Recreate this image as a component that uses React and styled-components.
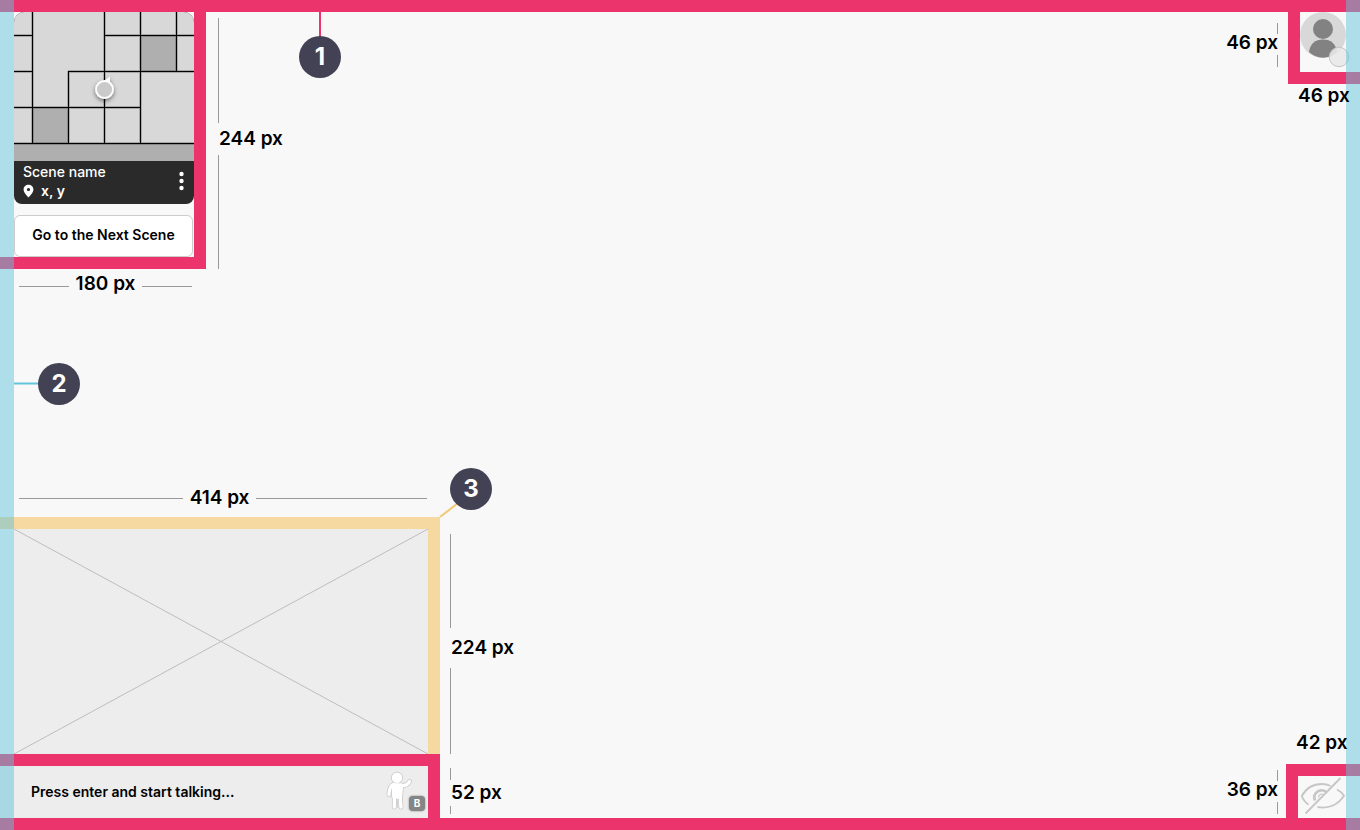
import React from "react";
import styled, { createGlobalStyle } from "styled-components";

const PINK = "#eb346c";
const YELLOW = "#f6d9a1";
const RAIL = "rgba(100, 196, 218, 0.5)";

const GlobalStyle = createGlobalStyle`
  *, *::before, *::after { box-sizing: border-box; }
  body {
    margin: 0;
    background: #f8f8f8;
    color: #000;
    font-family: Inter, "Liberation Sans", sans-serif;
  }
  button, input { font: inherit; color: inherit; }
`;

const Page = styled.main`
  position: relative;
  display: flex;
  flex-direction: column;
  min-height: 100vh;
  border-top: 12px solid ${PINK};
  border-bottom: 12px solid ${PINK};
`;

const Rail = styled.div`
  position: absolute;
  top: -12px;
  bottom: -12px;
  ${(p) => p.$side}: 0;
  width: 14px;
  background: ${RAIL};
  pointer-events: none;
`;

const Section = styled.section`
  display: flex;
  justify-content: space-between;
  align-items: ${(p) => p.$align};
`;

const Group = styled.div`
  display: flex;
  align-items: ${(p) => p.$align || "flex-start"};
`;

const Column = styled.div`
  display: flex;
  flex-direction: column;
`;

const SideColumn = styled(Column)`
  height: 350px;
  padding-left: 10px;
`;

const Middle = styled.div`
  display: flex;
  flex: 1;
  align-items: center;
  padding-left: 38px;
`;

/* Measurements */

const Label = styled.span`
  position: relative;
  z-index: 1;
  font-size: 19px;
  font-weight: 600;
  line-height: 24px;
  white-space: nowrap;
`;

const HorizontalMeasure = styled.div`
  display: flex;
  align-items: center;
  gap: 7px;
  padding: 0 ${(p) => p.$end}px 0 19px;
  margin: ${(p) => p.$margin};
`;

const HLine = styled.i`
  flex: ${(p) => p.$grow} 1 0;
  height: 1px;
  margin-top: ${(p) => p.$drop || 0}px;
  background: #999;
`;

const VerticalMeasure = styled.div`
  display: flex;
  flex-direction: column;
  align-items: ${(p) => (p.$side === "right" ? "flex-end" : "flex-start")};
  gap: ${(p) => p.$gap}px;
  margin: ${(p) => p.$margin};

  ${Label} {
    padding-left: ${(p) => (p.$side === "right" ? 0 : 1)}px;
  }
`;

const CompactMeasure = styled(VerticalMeasure)`
  ${Label} {
    padding-bottom: 3px;
    line-height: 18px;
  }
`;

const VLine = styled.i`
  width: 1px;
  height: ${(p) => p.$length}px;
  background: #999;
`;

function VMeasure({ as: Box = VerticalMeasure, text, before, after, gap = 0, side = "left", margin = "0" }) {
  return (
    <Box $side={side} $gap={gap} $margin={margin}>
      <VLine $length={before} />
      <Label>{text}</Label>
      <VLine $length={after} />
    </Box>
  );
}

/* Numbered callouts */

const Callout = styled.div`
  position: relative;
  display: flex;
  align-items: center;
  justify-content: center;
  width: 42px;
  height: 42px;
  border-radius: 50%;
  background: #434255;
  color: #fff;
  font-size: 24px;
  font-weight: 700;
  line-height: 28px;
  margin: ${(p) => p.$margin || "0"};
`;

const Connector = styled.svg`
  position: absolute;
  z-index: -1;
  overflow: visible;
  left: 0;
  top: 0;
  width: 42px;
  height: 42px;
`;

function Marker({ number, to, color, margin }) {
  return (
    <Callout $margin={margin}>
      <Connector viewBox="0 0 42 42" aria-hidden="true">
        <path d={to} stroke={color} strokeWidth="2" fill="none" />
      </Connector>
      {number}
    </Callout>
  );
}

/* Scene panel */

const ScenePanel = styled.div`
  width: 206px;
  height: 257px;
  padding-left: 14px;
  border: solid ${PINK};
  border-width: 0 12px 12px 0;
`;

const SceneCard = styled.div`
  overflow: hidden;
  border-radius: 10px 10px 8px 8px;
  background: #2a2a2a;
`;

const Map = styled.svg`
  display: block;
  width: 100%;
  height: 149px;
`;

const SceneInfo = styled.div`
  display: flex;
  align-items: center;
  justify-content: space-between;
  height: 43px;
  padding: 0 8px 3px 9px;
  color: #fff;
  font-size: 14px;
  font-weight: 500;
  line-height: 19px;
`;

const Coordinates = styled.div`
  display: flex;
  align-items: center;
  gap: 7px;
  font-weight: 600;
`;

const MenuButton = styled.button`
  display: flex;
  padding: 0;
  border: 0;
  background: none;
`;

const NextButton = styled.button`
  display: block;
  width: 179px;
  height: 42px;
  margin-top: 11px;
  padding: 0 0 3px;
  border: 1px solid #ccc;
  border-radius: 6px;
  background: #fff;
  font-size: 14px;
  font-weight: 600;
`;

function MiniMap() {
  const lines =
    "M18.5 0V131M90.5 0V131M126.5 0V131M162.5 0V59M54.5 59V131M0 23.5H18M90 23.5H180M0 59.5H18M54 59.5H180M0 95.5H127M0 131.5H180";
  return (
    <Map viewBox="0 0 180 149" role="img" aria-label="Scene map">
      <defs>
        <filter id="soft" x="-50%" y="-50%" width="200%" height="200%">
          <feDropShadow dx="0" dy="2" stdDeviation="2" floodOpacity="0.5" />
        </filter>
      </defs>
      <rect width="180" height="149" fill="#d8d8d8" />
      <path d="M126 23h36v36h-36zM18 95h36v36H18zM0 131h180v18H0z" fill="#afafaf" />
      <path d={lines} stroke="#000" strokeOpacity="0.3" strokeWidth="2.4" />
      <path d={lines} stroke="#000" strokeWidth="1" />
      <g filter="url(#soft)">
        <path d="M90 69L96 64.500L96 72z" fill="#fff" />
        <circle cx="90.500" cy="77.500" r="8.500" fill="#cacaca" stroke="#fff" strokeWidth="1.800" />
      </g>
    </Map>
  );
}

/* Profile and visibility panels */

const ProfilePanel = styled.div`
  width: 72px;
  height: 72px;
  border: solid ${PINK};
  border-width: 0 0 12px 12px;
`;

const VisibilityPanel = styled.div`
  width: 74px;
  height: 54px;
  border: solid ${PINK};
  border-width: 12px 0 0 12px;
`;

const IconButton = styled.button`
  display: block;
  padding: 0;
  border: 0;
  background: none;
  svg { display: block; overflow: visible; }
`;

const LabelRow = styled.div`
  padding-left: 10px;
  margin-bottom: ${(p) => p.$below || 0}px;
`;

/* Media and chat */

const MediaPanel = styled.div`
  width: 440px;
  height: 237px;
  padding-left: 14px;
  border: solid ${YELLOW};
  border-width: 12px 12px 0 0;
`;

const Placeholder = styled.svg`
  display: block;
  width: 100%;
  height: 100%;
  background: #ededed;
`;

const ChatPanel = styled.form`
  display: flex;
  align-items: center;
  width: 440px;
  height: 64px;
  padding: 0 3px 0 31px;
  border: solid ${PINK};
  border-width: 12px 12px 0 0;
  background: #ededed;
`;

const ChatInput = styled.input`
  flex: 1;
  min-width: 0;
  padding: 0;
  border: 0;
  outline: 0;
  background: none;
  font-size: 14px;
  font-weight: 600;
  line-height: 20px;
  &::placeholder { color: #000; opacity: 1; }
`;

const EmoteButton = styled.button`
  position: relative;
  width: 42px;
  height: 42px;
  padding: 0;
  border: 0;
  background: none;
  svg { display: block; overflow: visible; }
`;

const KeyBadge = styled.kbd`
  position: absolute;
  right: 0;
  bottom: 2px;
  width: 16px;
  height: 15px;
  border-radius: 4px;
  background: #858585;
  box-shadow: 0 0 2px #777;
  color: #fff;
  font-family: inherit;
  font-size: 10px;
  font-weight: 700;
  line-height: 15px;
  text-align: center;
`;

function Figure() {
  const limbs = (
    <>
      <circle cx="14" cy="6.800" r="3.600" />
      <path
        d="M10.500 13.500C8 14 6.300 17.500 6 23.500M17.500 14.500C22 15 25 13.500 26.500 10.500M11.500 23L11.300 36M17 23L18 36"
        fill="none"
        strokeLinecap="round"
      />
      <path d="M10.300 13.800H18.500L17.500 26H10.800z" strokeLinejoin="round" />
    </>
  );
  return (
    <svg width="42" height="42" viewBox="0 0 42 42" aria-hidden="true">
      <g fill="#c8c8c8" stroke="#c8c8c8" strokeWidth="4.800">{limbs}</g>
      <g fill="#fff" stroke="#fff" strokeWidth="3.300">{limbs}</g>
      <path d="M14.500 28V37" stroke="#d4d4d4" strokeWidth="1" />
    </svg>
  );
}

function HiddenEye() {
  return (
    <svg width="48" height="42" viewBox="0 0 48 42" fill="none" stroke="#c6c6c6" strokeWidth="1.800" aria-hidden="true">
      <path d="M10.500 28.700C7.500 26.500 5 23.500 3.800 20C8 12.500 15 8 24 8C27 8 30 8.700 32.500 10" />
      <path d="M39 13.500C42 15 44.500 17.500 46 19.800C40.500 28.500 31 33 19.500 31" />
      <path d="M17 24.500C14.500 19.500 18.500 14.200 24 14.200C26 14.200 27.700 15 29 16.500" strokeWidth="2.600" />
      <path d="M20.500 21.500C20.700 19.300 22.500 17.900 25 18" strokeWidth="1.200" />
      <path d="M42.500 2L7.500 37.500" />
    </svg>
  );
}

export default function App() {
  return (
    <>
      <GlobalStyle />
      <Page>
        <Section $align="flex-start">
          <Group>
            <Column>
              <ScenePanel>
                <SceneCard>
                  <MiniMap />
                  <SceneInfo>
                    <div>
                      <div>Scene name</div>
                      <Coordinates>
                        <svg width="11" height="14" viewBox="0 0 11 14" aria-hidden="true">
                          <path
                            fillRule="evenodd"
                            fill="#fff"
                            d="M5.500 .8C2.700 .8 .6 2.900 .6 5.500C.6 8.600 4 11.700 5.500 13.500C7 11.700 10.400 8.600 10.400 5.500C10.400 2.900 8.300 .8 5.500 .8zM5.500 3.900a1.600 1.600 0 1 1 0 3.200a1.600 1.600 0 0 1 0-3.200z"
                          />
                        </svg>
                        x, y
                      </Coordinates>
                    </div>
                    <MenuButton type="button" aria-label="Scene menu">
                      <svg width="9" height="20" viewBox="0 0 9 20" fill="#fff">
                        <circle cx="4.500" cy="3" r="2.200" />
                        <circle cx="4.500" cy="10" r="2.200" />
                        <circle cx="4.500" cy="17" r="2.200" />
                      </svg>
                    </MenuButton>
                  </SceneInfo>
                </SceneCard>
                <NextButton type="button">Go to the Next Scene</NextButton>
              </ScenePanel>
              <HorizontalMeasure $end={14} $margin="3px 0 4px">
                <HLine $grow={1} $drop={4} />
                <Label>180 px</Label>
                <HLine $grow={1} $drop={4} />
              </HorizontalMeasure>
            </Column>
            <VMeasure text="244 px" before={105} after={114} gap={4} margin="6px 0 0 12px" />
            <Marker number="1" to="M21 -24V10" color={PINK} margin="24px 0 0 16px" />
          </Group>
          <Group>
            <VMeasure as={CompactMeasure} text="46 px" before={11} after={12} side="right" margin="11px 10px 0 0" />
            <Column>
              <ProfilePanel>
                <IconButton type="button" aria-label="Profile">
                  <svg width="46" height="46" viewBox="0 0 46 46">
                    <circle cx="23" cy="23" r="23" fill="#d8d8d8" />
                    <circle cx="23" cy="17" r="10" fill="#828282" />
                    <path d="M9 40C10 32 15 27.500 23 27.500S36 32 37 40C29 47.500 17 47.500 9 40z" fill="#828282" />
                    <circle cx="39" cy="45" r="9.700" fill="#e8e8e8" fillOpacity="0.9" stroke="#c4c4c4" />
                  </svg>
                </IconButton>
              </ProfilePanel>
              <LabelRow>
                <Label>46 px</Label>
              </LabelRow>
            </Column>
          </Group>
        </Section>

        <Middle>
          <Marker number="2" to="M-24 20.500H10" color="#64c4da" />
        </Middle>

        <Section $align="flex-end">
          <Group $align="flex-end">
            <Column>
              <HorizontalMeasure $end={13} $margin="0 0 7px">
                <HLine $grow={165} />
                <Label>414 px</Label>
                <HLine $grow={172} />
              </HorizontalMeasure>
              <MediaPanel>
                <Placeholder viewBox="0 0 414 225" preserveAspectRatio="none" role="img" aria-label="Media placeholder">
                  <path d="M0 0L414 225M414 0L0 225" stroke="#bdbdbd" />
                </Placeholder>
              </MediaPanel>
              <ChatPanel onSubmit={(e) => e.preventDefault()}>
                <ChatInput aria-label="Message" placeholder="Press enter and start talking..." />
                <EmoteButton type="button" aria-label="Emotes">
                  <Figure />
                  <KeyBadge>B</KeyBadge>
                </EmoteButton>
              </ChatPanel>
            </Column>
            <SideColumn>
              <Marker number="3" to="M-10 49L12 32" color="#f2c870" />
              <VMeasure text="224 px" before={94} after={86} gap={8} margin="24px 0 0 0" />
              <VMeasure text="52 px" before={12} after={8} gap={1} margin="14px 0 0 0" />
            </SideColumn>
          </Group>
          <Group $align="flex-end">
            <VMeasure as={CompactMeasure} text="36 px" before={11} after={12} side="right" margin="0 8px 4px 0" />
            <Column>
              <LabelRow $below={9}>
                <Label>42 px</Label>
              </LabelRow>
              <VisibilityPanel>
                <IconButton type="button" aria-label="Hide interface">
                  <HiddenEye />
                </IconButton>
              </VisibilityPanel>
            </Column>
          </Group>
        </Section>
        <Rail $side="left" />
        <Rail $side="right" />
      </Page>
    </>
  );
}
